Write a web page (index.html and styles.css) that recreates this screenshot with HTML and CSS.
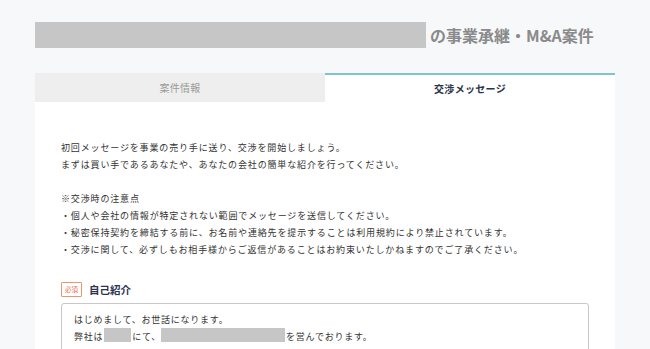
FILE: index.html
```html
<!DOCTYPE html>
<html lang="ja">
<head>
    <meta charset="UTF-8">
    <meta name="viewport" content="width=device-width, initial-scale=1.0">
    <title>交渉メッセージ</title>
    <link rel="stylesheet" href="styles.css">
</head>
<body>

<div class="page">
    <div class="heading">
        <span class="mask mask-title"></span>
        <h1>の事業承継・M&amp;A案件</h1>
    </div>

    <div class="tabs">
        <a href="#" class="tab">案件情報</a>
        <a href="#" class="tab active">交渉メッセージ</a>
    </div>

    <div class="card">
        <p class="intro">
            初回メッセージを事業の売り手に送り、交渉を開始しましょう。<br>
            まずは買い手であるあなたや、あなたの会社の簡単な紹介を行ってください。
        </p>
        <p class="intro">
            ※交渉時の注意点<br>
            ・個人や会社の情報が特定されない範囲でメッセージを送信してください。<br>
            ・秘密保持契約を締結する前に、お名前や連絡先を提示することは利用規約により禁止されています。<br>
            ・交渉に関して、必ずしもお相手様からご返信があることはお約束いたしかねますのでご了承ください。
        </p>

        <div class="field-label">
            <span class="required">必須</span>
            <span class="label-text">自己紹介</span>
        </div>
        <div class="textarea">
            <div>はじめまして、お世話になります。</div>
            <div>弊社は<span class="mask mask-small"></span>にて、<span class="mask mask-wide"></span>を営んでおります。</div>
        </div>
    </div>
</div>

</body>
</html>
```

FILE: styles.css
```css
body {
    font-family: "Noto Sans CJK JP", "Noto Sans", sans-serif;
    background-color: #f7f8fa;
    margin: 0;
    padding: 0;
    color: #333;
}
.page {
    width: 580px;
    margin-left: 35px;
}
.heading {
    display: flex;
    align-items: center;
    padding-top: 22px;
}
.heading h1 {
    margin: 0 0 0 4px;
    font-size: 16px;
    font-weight: bold;
    color: #8a8a8a;
    line-height: 26px;
}
.mask {
    display: inline-block;
    background-color: #c6c6c7;
}
.mask-title {
    width: 391px;
    height: 26px;
}
.mask-small {
    width: 27px;
    height: 14px;
    vertical-align: -2px;
    margin: 0 1px;
}
.mask-wide {
    width: 124px;
    height: 14px;
    vertical-align: -2px;
    margin-right: 1px;
}
.tabs {
    display: flex;
    margin-top: 25px;
}
.tab {
    flex: 1;
    height: 29px;
    line-height: 29px;
    text-align: center;
    font-size: 10px;
    letter-spacing: 0.3px;
    text-decoration: none;
    color: #9a9a9a;
    background-color: #eeeeee;
}
.tab.active {
    background-color: white;
    color: #2c3448;
    font-weight: bold;
    border-top: 2px solid #7cc3d3;
    height: 27px;
    line-height: 28px;
}
.card {
    background-color: white;
    padding: 37px 26px 20px 26px;
}
.intro {
    margin: 0 0 17px 0;
    font-size: 9px;
    letter-spacing: 0.85px;
    line-height: 17px;
    color: #333;
}
.field-label {
    display: flex;
    align-items: center;
    margin-top: 24px;
}
.required {
    width: 19px;
    height: 13px;
    border: 1px solid #ec9470;
    color: #e5734a;
    font-size: 6.5px;
    line-height: 13px;
    text-align: center;
    border-radius: 1px;
}
.label-text {
    margin-left: 7px;
    font-size: 10.5px;
    font-weight: bold;
    color: #2c3350;
}
.textarea {
    margin-top: 6px;
    border: 1px solid #c8c8c8;
    border-radius: 3px;
    padding: 8px 13px 10px 12px;
    font-size: 9px;
    letter-spacing: 0.75px;
    line-height: 16px;
    color: #333;
}
```
